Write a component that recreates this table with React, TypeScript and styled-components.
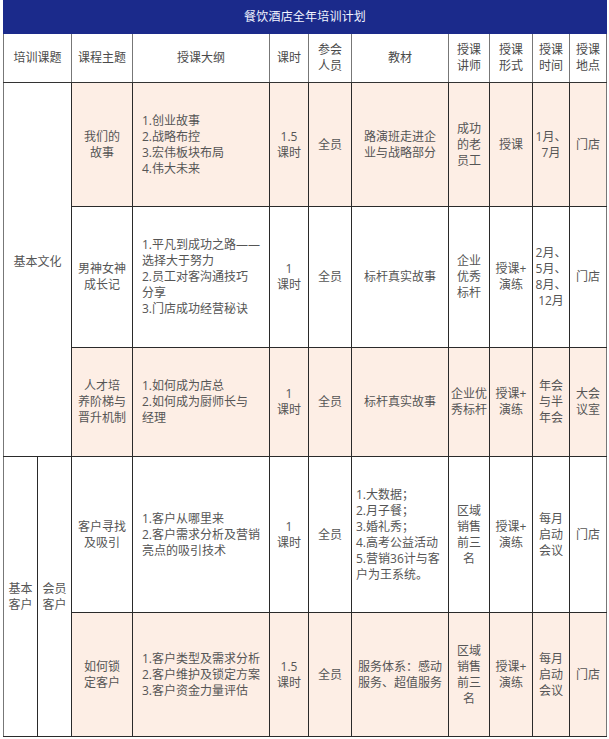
import React from "react";
import styled, { createGlobalStyle } from "styled-components";

const GlobalStyle = createGlobalStyle`
  html, body {
    margin: 0;
    padding: 0;
    background: #fff;
  }
  body {
    font-family: "Open Sans", "Noto Sans CJK SC", sans-serif;
  }
`;

const Page = styled.div`
  padding: 0 3px;
  width: 604px;
`;

const Table = styled.table`
  width: 604px;
  border-collapse: collapse;
  table-layout: fixed;
  font-size: 12px;
  line-height: 16px;
  color: #555;
`;

const TitleCell = styled.td`
  height: 32px;
  padding: 0;
  background: #1b2a8b;
  border: 1px solid #1b2a8b;
  color: #f2f4ff;
  text-align: center;
  font-size: 12px;
  letter-spacing: 0.2px;
`;

const HeadCell = styled.th`
  padding: 0 2px;
  font-weight: normal;
  color: #4a4a4a;
  text-align: center;
  vertical-align: middle;
  border: 1px solid #777;
  border-bottom-color: #333;
  white-space: nowrap;
`;

const Cell = styled.td<{ $fill?: boolean; $align?: "left" | "center"; $pad?: number }>`
  padding: 0 ${(p) => p.$pad ?? 2}px;
  background: ${(p) => (p.$fill ? "#fdeee5" : "#fff")};
  text-align: ${(p) => p.$align ?? "center"};
  vertical-align: middle;
  border: 1px solid #2a2a2a;
  white-space: nowrap;
`;

const EdgeCell = styled(Cell)`
  border-left-color: #777;
`;

const LastCell = styled(Cell)`
  border-right-color: #777;
`;

const Row = styled.tr<{ $h: number }>`
  height: ${(p) => p.$h}px;
`;

const widths = [34, 34, 61, 137, 39, 43, 97, 41, 43, 37, 37];

function Lines({ items }: { items: string[] }) {
  return (
    <>
      {items.map((t, i) => (
        <React.Fragment key={i}>
          {i > 0 && <br />}
          {t}
        </React.Fragment>
      ))}
    </>
  );
}

export default function App() {
  return (
    <Page>
      <GlobalStyle />
      <Table>
        <colgroup>
          {widths.map((w, i) => (
            <col key={i} style={{ width: w }} />
          ))}
        </colgroup>
        <thead>
          <tr>
            <TitleCell colSpan={11}>餐饮酒店全年培训计划</TitleCell>
          </tr>
          <Row $h={49}>
            <HeadCell colSpan={2} style={{ borderLeftColor: "#777" }}>培训课题</HeadCell>
            <HeadCell>课程主题</HeadCell>
            <HeadCell>授课大纲</HeadCell>
            <HeadCell>课时</HeadCell>
            <HeadCell><Lines items={["参会", "人员"]} /></HeadCell>
            <HeadCell>教材</HeadCell>
            <HeadCell><Lines items={["授课", "讲师"]} /></HeadCell>
            <HeadCell><Lines items={["授课", "形式"]} /></HeadCell>
            <HeadCell><Lines items={["授课", "时间"]} /></HeadCell>
            <HeadCell><Lines items={["授课", "地点"]} /></HeadCell>
          </Row>
        </thead>
        <tbody>
          <Row $h={124}>
            <EdgeCell colSpan={2} rowSpan={3} style={{ paddingBottom: 16 }}>基本文化</EdgeCell>
            <Cell $fill><Lines items={["我们的", "故事"]} /></Cell>
            <Cell $fill $align="left" $pad={9}>
              <Lines items={["1.创业故事", "2.战略布控", "3.宏伟板块布局", "4.伟大未来"]} />
            </Cell>
            <Cell $fill><Lines items={["1.5", "课时"]} /></Cell>
            <Cell $fill>全员</Cell>
            <Cell $fill><Lines items={["路演班走进企", "业与战略部分"]} /></Cell>
            <Cell $fill><Lines items={["成功", "的老", "员工"]} /></Cell>
            <Cell $fill>授课</Cell>
            <Cell $fill><Lines items={["1月、", "7月"]} /></Cell>
            <LastCell $fill>门店</LastCell>
          </Row>
          <Row $h={141}>
            <Cell><Lines items={["男神女神", "成长记"]} /></Cell>
            <Cell $align="left" $pad={9}>
              <Lines items={["1.平凡到成功之路——", "选择大于努力", "2.员工对客沟通技巧", "分享", "3.门店成功经营秘诀"]} />
            </Cell>
            <Cell><Lines items={["1", "课时"]} /></Cell>
            <Cell>全员</Cell>
            <Cell>标杆真实故事</Cell>
            <Cell><Lines items={["企业", "优秀", "标杆"]} /></Cell>
            <Cell><Lines items={["授课+", "演练"]} /></Cell>
            <Cell><Lines items={["2月、", "5月、", "8月、", "12月"]} /></Cell>
            <LastCell>门店</LastCell>
          </Row>
          <Row $h={109}>
            <Cell $fill><Lines items={["人才培", "养阶梯与", "晋升机制"]} /></Cell>
            <Cell $fill $align="left" $pad={9}>
              <Lines items={["1.如何成为店总", "2.如何成为厨师长与", "经理"]} />
            </Cell>
            <Cell $fill><Lines items={["1", "课时"]} /></Cell>
            <Cell $fill>全员</Cell>
            <Cell $fill>标杆真实故事</Cell>
            <Cell $fill><Lines items={["企业优", "秀标杆"]} /></Cell>
            <Cell $fill><Lines items={["授课+", "演练"]} /></Cell>
            <Cell $fill><Lines items={["年会", "与半", "年会"]} /></Cell>
            <LastCell $fill><Lines items={["大会", "议室"]} /></LastCell>
          </Row>
          <Row $h={156}>
            <EdgeCell rowSpan={2}><Lines items={["基本", "客户"]} /></EdgeCell>
            <Cell rowSpan={2}><Lines items={["会员", "客户"]} /></Cell>
            <Cell><Lines items={["客户寻找", "及吸引"]} /></Cell>
            <Cell $align="left" $pad={9}>
              <Lines items={["1.客户从哪里来", "2.客户需求分析及营销", "亮点的吸引技术"]} />
            </Cell>
            <Cell><Lines items={["1", "课时"]} /></Cell>
            <Cell>全员</Cell>
            <Cell $align="left" $pad={4}>
              <Lines items={["1.大数据；", "2.月子餐；", "3.婚礼秀；", "4.高考公益活动", "5.营销36计与客", "户为王系统。"]} />
            </Cell>
            <Cell><Lines items={["区域", "销售", "前三", "名"]} /></Cell>
            <Cell><Lines items={["授课+", "演练"]} /></Cell>
            <Cell><Lines items={["每月", "启动", "会议"]} /></Cell>
            <LastCell>门店</LastCell>
          </Row>
          <Row $h={124}>
            <Cell $fill><Lines items={["如何锁", "定客户"]} /></Cell>
            <Cell $fill $align="left" $pad={9}>
              <Lines items={["1.客户类型及需求分析", "2.客户维护及锁定方案", "3.客户资金力量评估"]} />
            </Cell>
            <Cell $fill><Lines items={["1.5", "课时"]} /></Cell>
            <Cell $fill>全员</Cell>
            <Cell $fill><Lines items={["服务体系：感动", "服务、超值服务"]} /></Cell>
            <Cell $fill><Lines items={["区域", "销售", "前三", "名"]} /></Cell>
            <Cell $fill><Lines items={["授课+", "演练"]} /></Cell>
            <Cell $fill><Lines items={["每月", "启动", "会议"]} /></Cell>
            <LastCell $fill>门店</LastCell>
          </Row>
        </tbody>
      </Table>
    </Page>
  );
}
